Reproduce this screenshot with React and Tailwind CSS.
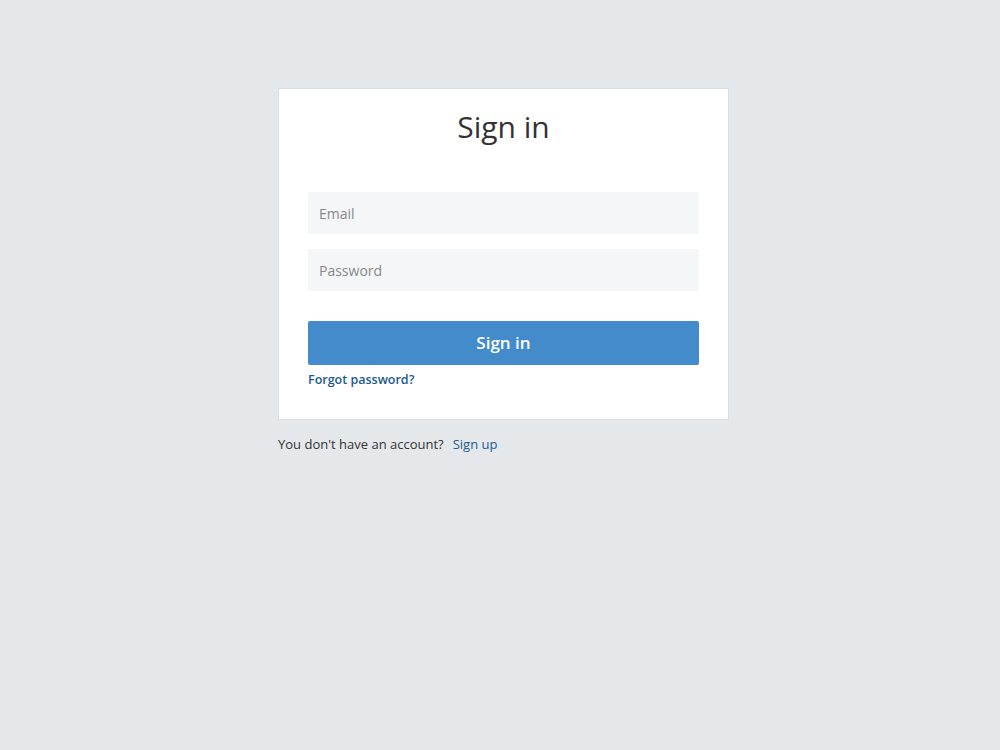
export default function App() {
  return (
    <div
      className="min-h-[750px] w-full bg-[#e4e8eb] pt-[88px]"
      style={{ fontFamily: '"Open Sans", "Liberation Sans", sans-serif' }}
    >
      <div className="ml-[278px] w-[451px]">
        <div className="border border-[#dcdfe2] bg-white px-[29px] pt-[18px] pb-[29px]">
          <h1 className="text-center text-[30px] leading-[40px] font-normal text-[#333]">Sign in</h1>
          <form className="mt-[45px]" onSubmit={(e) => e.preventDefault()}>
            <input
              type="email"
              placeholder="Email"
              className="block h-[42px] w-full rounded-[2px] bg-[#f5f6f8] px-[11px] text-[14px] text-[#333] outline-none placeholder:text-[#85888b]"
            />
            <input
              type="password"
              placeholder="Password"
              className="mt-[15px] block h-[42px] w-full rounded-[2px] bg-[#f5f6f8] px-[11px] text-[14px] text-[#333] outline-none placeholder:text-[#85888b]"
            />
            <button
              type="submit"
              className="mt-[30px] block h-[44px] w-full rounded-[2px] bg-[#438bcb] text-[17px] font-semibold text-white"
            >
              Sign in
            </button>
          </form>
          <a href="#" className="mt-[5px] block text-[12.5px] leading-[20px] font-semibold text-[#1c5b8e]">
            Forgot password?
          </a>
        </div>
        <p className="mt-[14px] text-[13px] leading-[20px] text-[#333]">
          You don't have an account?
          <a href="#" className="ml-[9px] text-[#1c5b8e]">Sign up</a>
        </p>
      </div>
    </div>
  );
}
